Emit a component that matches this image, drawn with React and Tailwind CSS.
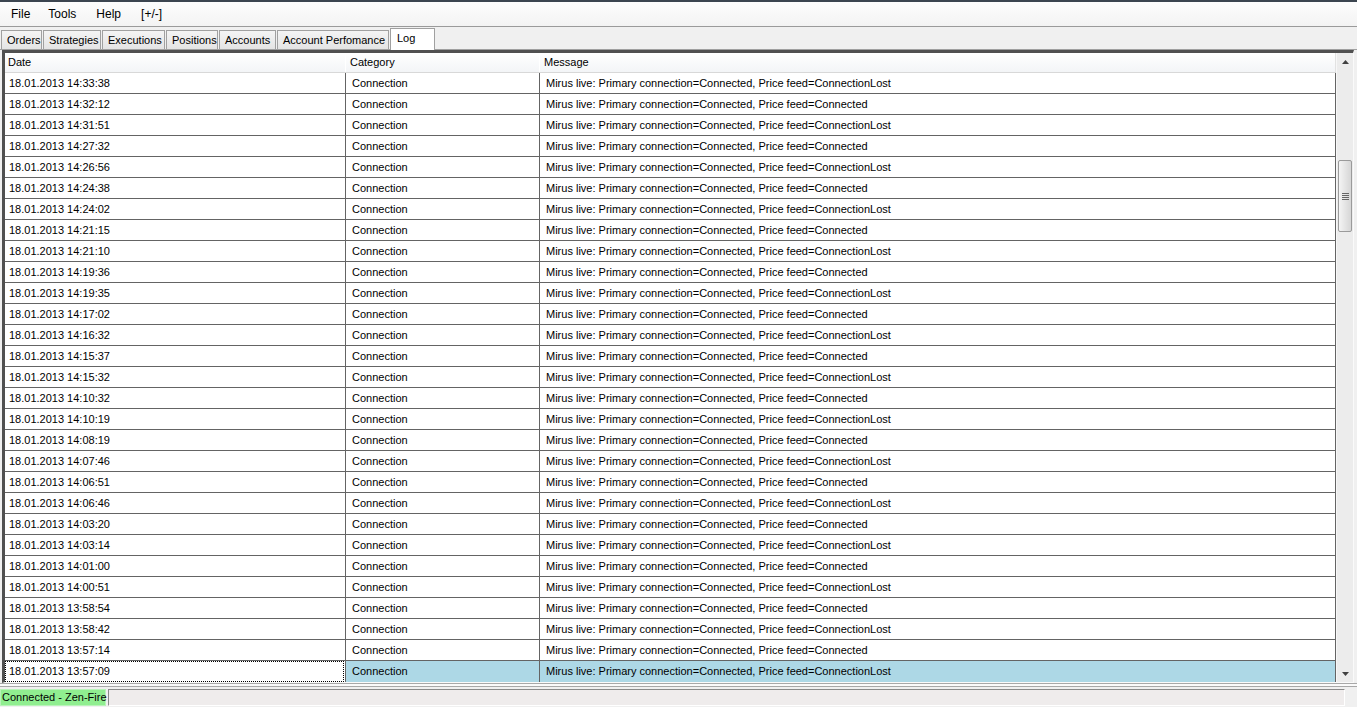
import React from 'react'

const times = [
  '14:33:38', '14:32:12', '14:31:51', '14:27:32', '14:26:56', '14:24:38', '14:24:02', '14:21:15',
  '14:21:10', '14:19:36', '14:19:35', '14:17:02', '14:16:32', '14:15:37', '14:15:32', '14:10:32',
  '14:10:19', '14:08:19', '14:07:46', '14:06:51', '14:06:46', '14:03:20', '14:03:14', '14:01:00',
  '14:00:51', '13:58:54', '13:58:42', '13:57:14', '13:57:09',
]

const rows = times.map(function (t, i) {
  return {
    date: '18.01.2013 ' + t,
    category: 'Connection',
    message: 'Mirus live: Primary connection=Connected, Price feed=' + (i % 2 === 0 ? 'ConnectionLost' : 'Connected'),
  }
})

const tabs = [
  { name: 'Orders', w: 'w-[41px]' },
  { name: 'Strategies', w: 'w-[58px]' },
  { name: 'Executions', w: 'w-[63px]' },
  { name: 'Positions', w: 'w-[52px]' },
  { name: 'Accounts', w: 'w-[57px]' },
  { name: 'Account Perfomance', w: 'w-[112px]' },
]

function Arrow({ down }) {
  return (
    <svg width="7" height="4" viewBox="0 0 7 4">
      {down ? <path d="M0 0 H7 L3.5 4 Z" fill="#404040" /> : <path d="M0 4 H7 L3.5 0 Z" fill="#404040" />}
    </svg>
  )
}

function Scrollbar() {
  return (
    <div className="w-[17px] h-full flex flex-col bg-[#ececec] border-l border-[#f7f7f7]">
      <div className="h-[17px] flex items-center justify-center">
        <Arrow />
      </div>
      <div className="flex-1 flex flex-col">
        <div className="mt-[90px] mx-[1px] h-[72px] rounded-[2px] border border-[#9a9a9a] bg-gradient-to-r from-[#f4f4f4] to-[#d6d6d6] flex flex-col items-center justify-center gap-[1px]">
          <div className="w-[7px] h-[1px] bg-[#666]" />
          <div className="w-[7px] h-[1px] bg-[#666]" />
          <div className="w-[7px] h-[1px] bg-[#666]" />
          <div className="w-[7px] h-[1px] bg-[#666]" />
        </div>
      </div>
      <div className="h-[17px] flex items-center justify-center">
        <Arrow down />
      </div>
    </div>
  )
}

export default function App() {
  return (
    <div
      className="w-[1357px] h-[707px] overflow-hidden bg-[#f0f0f0] flex flex-col text-black"
      style={{ fontFamily: '"Liberation Sans", Arial, sans-serif' }}
    >
      {/* menu */}
      <div className="h-[26px] border-t-2 border-[#3c4550] bg-gradient-to-b from-[#fdfdfd] to-[#f3f3f3] flex items-center text-[12px]">
        <span className="ml-[11px]">File</span>
        <span className="ml-[18px]">Tools</span>
        <span className="ml-[20px]">Help</span>
        <span className="ml-[20px]">[+/-]</span>
      </div>
      <div className="h-[1px] bg-[#9a9a9a]" />

      {/* tabs */}
      <div className="h-[23px] flex items-end pl-[1px] gap-[1px] border-b border-[#a0a0a0] text-[11px]">
        {tabs.map(function (t) {
          return (
            <div
              key={t.name}
              className={t.w + ' h-[19px] border border-b-0 border-[#a0a0a0] bg-gradient-to-b from-[#f4f4f4] to-[#e4e4e4] pl-[5px] flex items-center whitespace-nowrap'}
            >
              {t.name}
            </div>
          )
        })}
        <div className="w-[45px] h-[22px] -mb-px bg-white border border-b-0 border-[#a0a0a0] pl-[6px] pb-[2px] flex items-center">
          Log
        </div>
      </div>

      {/* grid */}
      <div className="ml-[2px] mr-[3px] h-[633px] border-t-[3px] border-l-[3px] border-t-[#505050] border-l-[#505050] border-r border-r-[#fafafa] border-b border-b-[#fafafa] flex">
        <div className="w-[1331px] flex flex-col bg-white text-[11px]">
          <div className="h-[20px] flex border-b border-[#d8d8d8] bg-gradient-to-b from-[#ffffff] to-[#f3f5f7]">
            <div className="w-[341px] pl-[3px] flex items-center border-r border-[#ffffff]">Date</div>
            <div className="w-[194px] pl-[4px] flex items-center border-r border-[#ffffff]">Category</div>
            <div className="w-[796px] pl-[4px] flex items-center border-r border-[#e2e2e2]">Message</div>
          </div>
          {rows.map(function (r, i) {
            const sel = i === rows.length - 1
            return (
              <div key={i} className={'h-[21px] flex ' + (sel ? '' : 'border-b border-[#646464]')}>
                <div className="relative w-[341px] pl-[4px] flex items-center border-r border-[#646464]">
                  {r.date}
                  {sel && <div className="absolute inset-0 right-[1px] border border-dotted border-black" />}
                </div>
                <div className={'w-[194px] pl-[6px] flex items-center border-r border-[#646464] ' + (sel ? 'bg-[#add8e6]' : '')}>
                  {r.category}
                </div>
                <div className={'w-[796px] pl-[6px] flex items-center border-r border-[#646464] whitespace-nowrap ' + (sel ? 'bg-[#add8e6]' : '')}>
                  {r.message}
                </div>
              </div>
            )
          })}
        </div>
        <Scrollbar />
      </div>

      {/* separator */}
      <div className="h-[5px]">
        <div className="h-[4px] border-t border-b border-[#a8a8a8] bg-[#fafafa]" />
      </div>

      {/* status */}
      <div className="h-[19px] flex items-start pt-[1px] text-[11px]">
        <div className="w-[106px] h-[17px] bg-[#90ee90] border border-[#b9f3b9] pl-[1px] flex items-center whitespace-nowrap">
          Connected - Zen-Fire
        </div>
        <div className="ml-[2px] w-[1237px] h-[17px] bg-[#efecec] border-t border-l border-[#8a8a8a] border-b border-r border-b-white border-r-white" />
      </div>
    </div>
  )
}
